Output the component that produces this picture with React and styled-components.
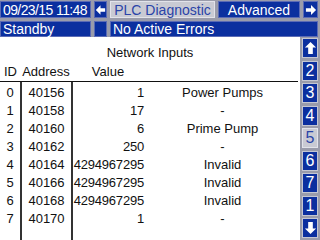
import React from "react";
import styled, { createGlobalStyle, css } from "styled-components";

const Global = createGlobalStyle`
  html, body { margin: 0; padding: 0; background: #fff; }
  * { box-sizing: border-box; }
`;

const BLUE = "#0b2f9f";
const GRAY = "#9a9cab";
const LIGHT = "#c9cad3";
const INK = "#111";

const Screen = styled.div`
  width: 320px;
  height: 240px;
  display: flex;
  flex-direction: column;
  background: #fff;
  font-family: "Liberation Sans", Arial, sans-serif;
  overflow: hidden;
`;

const Header = styled.div`
  display: grid;
  grid-template-columns: 91px 13px 105px 82px 15px;
  grid-template-rows: 17px 16px;
  gap: 3px;
  padding: 1px 2px 1px 0;
  background: ${GRAY};
  height: 37px;
`;

const Cell = styled.div`
  display: flex;
  align-items: center;
  justify-content: ${({ $center }) => ($center ? "center" : "flex-start")};
  padding: ${({ $bare }) => ($bare ? "0" : "0 2px")};
  background: ${BLUE};
  border: 1px solid #5b6bb5;
  color: #fff;
  font-size: 14px;
  letter-spacing: ${({ $tight }) => ($tight ? "-0.6px" : "0")};
  white-space: nowrap;
  grid-column: ${({ $span }) => $span || "auto"};
  ${({ $active }) =>
    $active &&
    css`
      background: ${LIGHT};
      border-color: #e2e3ea;
      color: #2a44a8;
    `}
`;

const Body = styled.div`
  flex: 1;
  display: flex;
  min-height: 0;
`;

const Main = styled.div`
  flex: 1;
  display: flex;
  flex-direction: column;
  color: ${INK};
  font-size: 13px;
`;

const Title = styled.div`
  padding-top: 6px;
  line-height: 20px;
  text-align: center;
`;

const HeadRow = styled.div`
  display: grid;
  grid-template-columns: 21px 50px 74px 1fr;
  height: 19px;
  line-height: 18px;
  border-bottom: 1px solid ${INK};
  margin-right: 2px;
`;

const HeadCell = styled.div`
  text-align: center;
`;

const Table = styled.div`
  flex: 1;
  display: grid;
  grid-template-columns: 20px 51px 74px 1fr;
`;

const Column = styled.div`
  display: flex;
  flex-direction: column;
  padding-top: 2px;
  border-left: ${({ $line }) => ($line ? "2px solid #333" : "0")};
`;

const Item = styled.div`
  height: 18px;
  line-height: 18px;
  text-align: ${({ $align }) => $align || "center"};
  padding-right: ${({ $align }) => ($align === "right" ? "1px" : "0")};
  letter-spacing: ${({ $align }) => ($align === "right" ? "-0.2px" : "0")};
  white-space: nowrap;
`;

const Side = styled.div`
  width: 20px;
  background: ${GRAY};
  display: flex;
  flex-direction: column;
  gap: 2.5px;
  padding: 1px 2px 2px 2px;
`;

const SideButton = styled.div`
  height: 20px;
  display: flex;
  align-items: center;
  justify-content: center;
  background: ${({ $active }) => ($active ? LIGHT : BLUE)};
  border: 1px solid ${({ $active }) => ($active ? "#e2e3ea" : "#c4c6d2")};
  color: ${({ $active }) => ($active ? "#2a44a8" : "#fff")};
  font-size: 16px;
`;

const Arrow = ({ dir, w = 13, h = 15 }) => {
  const paths = {
    left: "M1 7.5 L6.5 2 L6.5 5.5 L12 5.5 L12 9.5 L6.5 9.5 L6.5 13 Z",
    right: "M12 7.5 L6.5 2 L6.5 5.5 L1 5.5 L1 9.5 L6.5 9.5 L6.5 13 Z",
    up: "M7 2 L13 8 L9.5 8 L9.5 15 L4.5 15 L4.5 8 L1 8 Z",
    down: "M7 15 L13 9 L9.5 9 L9.5 2 L4.5 2 L4.5 9 L1 9 Z",
  };
  const vb = dir === "up" || dir === "down" ? "0 0 14 17" : "0 0 13 15";
  return (
    <svg width={w} height={h} viewBox={vb}>
      <path d={paths[dir]} fill="#fff" />
    </svg>
  );
};

const rows = [
  ["0", "40156", "1", "Power Pumps"],
  ["1", "40158", "17", "-"],
  ["2", "40160", "6", "Prime Pump"],
  ["3", "40162", "250", "-"],
  ["4", "40164", "4294967295", "Invalid"],
  ["5", "40166", "4294967295", "Invalid"],
  ["6", "40168", "4294967295", "Invalid"],
  ["7", "40170", "1", "-"],
];

const sideItems = ["up", "2", "3", "4", "5", "6", "7", "1", "down"];

export default function App() {
  return (
    <Screen>
      <Global />
      <Header>
        <Cell $tight>09/23/15 11:48</Cell>
        <Cell $center $bare>
          <Arrow dir="left" w={12} h={14} />
        </Cell>
        <Cell $center $active>PLC Diagnostic</Cell>
        <Cell $center>Advanced</Cell>
        <Cell $center $bare>
          <Arrow dir="right" w={12} h={14} />
        </Cell>
        <Cell>Standby</Cell>
        <Cell />
        <Cell $span="3 / 6">No Active Errors</Cell>
      </Header>
      <Body>
        <Main>
          <Title>Network Inputs</Title>
          <HeadRow>
            <HeadCell>ID</HeadCell>
            <HeadCell>Address</HeadCell>
            <HeadCell>Value</HeadCell>
            <HeadCell />
          </HeadRow>
          <Table>
            <Column>
              {rows.map((r) => (
                <Item key={r[0]}>{r[0]}</Item>
              ))}
            </Column>
            <Column $line>
              {rows.map((r) => (
                <Item key={r[0]}>{r[1]}</Item>
              ))}
            </Column>
            <Column $line>
              {rows.map((r) => (
                <Item key={r[0]} $align="right">
                  {r[2]}
                </Item>
              ))}
            </Column>
            <Column>
              {rows.map((r) => (
                <Item key={r[0]}>{r[3]}</Item>
              ))}
            </Column>
          </Table>
        </Main>
        <Side>
          {sideItems.map((s) => (
            <SideButton key={s} $active={s === "5"}>
              {s === "up" || s === "down" ? <Arrow dir={s} w={13} h={16} /> : s}
            </SideButton>
          ))}
        </Side>
      </Body>
    </Screen>
  );
}
